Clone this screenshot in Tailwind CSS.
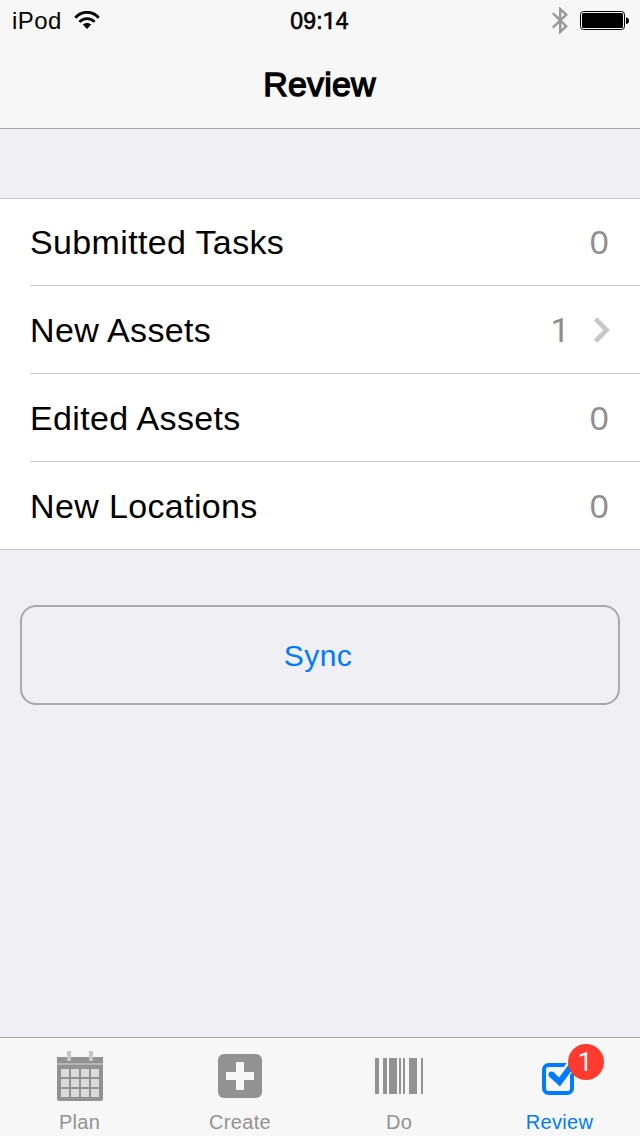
<!DOCTYPE html>
<html lang="en">
<head>
<meta charset="utf-8">
<title>Review</title>
<script src="https://cdn.jsdelivr.net/npm/@tailwindcss/browser@4"></script>
</head>
<body class="flex h-[1136px] w-[640px] flex-col overflow-hidden bg-[#efeff4] font-['Liberation_Sans',Arial,sans-serif] text-black">
  <header class="h-[129px] shrink-0 border-b border-[#a7a7aa] bg-[#f7f7f7]">
    <div class="grid h-10 grid-cols-3 items-center pl-3 pr-[11px]">
      <div class="flex items-center gap-3">
        <span class="text-2xl leading-[42px] tracking-[0.4px]">iPod</span>
        <svg class="h-5 w-[26px]" viewBox="0 0 26 20" fill="none" stroke="#000">
          <path d="M1.3 6.700C8-.6 18-.6 24.7 6.700" stroke-width="2.800"/>
          <path d="M5.4 10.900c4.2-4.500 11-4.500 15.2 0" stroke-width="2.800"/>
          <path d="M8.8 13.600c2.2-2.200 6.2-2.200 8.4 0L13 18z" fill="#000" stroke="none"/>
        </svg>
      </div>
      <div class="pr-0.5 text-center text-[23px] leading-[42px] tracking-[0.15px] [-webkit-text-stroke:0.6px_#000]">09:<span class="font-[Roboto] leading-none">1</span>4</div>
      <div class="flex items-center justify-end gap-3">
        <svg class="-mt-px h-[27px] w-4" viewBox="0 0 16 27" fill="none" stroke="#98989a" stroke-width="2.4"><path d="M.8 6.2l13.4 13L8.2 25V2l6 5.800L.8 20.600"/></svg>
        <svg class="h-5 w-[49px]" viewBox="0 0 49 20"><rect x=".5" y=".5" width="44" height="18" rx="3" fill="#f7f7f7" stroke="#000"/><rect x="2" y="2" width="41" height="15" rx="1.500" fill="#000"/><path d="M46 6.500c4 0 4 6.500 0 6.500z" fill="#000"/></svg>
      </div>
    </div>
    <h1 class="pr-px text-center text-[34px] leading-[88px] tracking-[0.2px] [-webkit-text-stroke:1.3px_#000]">Review</h1>
  </header>

  <main class="flex-1">
    <ul class="mt-[69px] border-y border-[#c8c7cc] bg-white text-[34px] leading-[87px] tracking-[0.36px]">
      <li class="ml-[30px] flex h-[87px] justify-between border-b border-[#c8c7cc] pr-[31px]"><span>Submitted Tasks</span><span class="text-[#8e8e93]">0</span></li>
      <li class="ml-[30px] flex h-[88px] justify-between border-b border-[#c8c7cc] pr-[30px] leading-[89px]"><span>New Assets</span>
        <span class="flex items-center gap-6 text-[#8e8e93]"><span class="pt-0.5 font-[Roboto]">1</span>
          <svg class="mt-px h-[26px] w-4" viewBox="0 0 16 26" fill="none" stroke="#c7c7cc" stroke-width="4.600"><path d="M1.600 2l11 11-11 11"/></svg>
        </span>
      </li>
      <li class="ml-[30px] flex h-[88px] justify-between border-b border-[#c8c7cc] pr-[31px] leading-[89px]"><span>Edited Assets</span><span class="text-[#8e8e93]">0</span></li>
      <li class="ml-[30px] flex h-[87px] justify-between pr-[31px] leading-[89px]"><span>New Locations</span><span class="text-[#8e8e93]">0</span></li>
    </ul>
    <button class="mx-5 mt-[55px] block h-[100px] w-[600px] rounded-2xl border-2 border-[#a9a9ac] pr-1 text-center text-[30px] tracking-[0.4px] text-[#007aff]">Sync</button>
  </main>

  <nav class="grid h-[99px] shrink-0 grid-cols-4 border-t border-[#a7a7aa] bg-[#f7f7f7] text-center text-xl leading-7 tracking-[0.3px] text-[#929292]">
    <a class="flex flex-col items-center">
      <svg class="mt-3 h-[52px] w-[46px]" viewBox="0 0 46 52">
        <path d="M0 7h46v6H0zM0 15h46v34a2 2 0 0 1-2 2H2a2 2 0 0 1-2-2z" fill="#929292"/>
        <path d="M0 13h46v2H0z" fill="#b5b5b5"/>
        <path d="M10 1h4v10h-4zM32 1h4v10h-4z" fill="#c8c8c8"/>
        <path d="M4 19h8v8H4zm10 0h8v8h-8zm10 0h8v8h-8zm10 0h8v8h-8zM4 29h8v8H4zm10 0h8v8h-8zm10 0h8v8h-8zm10 0h8v8h-8zM4 39h8v8H4zm10 0h8v8h-8zm10 0h8v8h-8zm10 0h8v8h-8z" fill="#dadada"/>
      </svg>
      <span class="mt-1.5 pr-px">Plan</span>
    </a>
    <a class="flex flex-col items-center">
      <svg class="mt-4 h-11 w-11" viewBox="0 0 44 44"><rect width="44" height="44" rx="6" fill="#929292"/><path d="M18 8h8v10h10v8H26v10h-8V26H8v-8h10z" fill="#f7f7f7"/></svg>
      <span class="mt-2.5">Create</span>
    </a>
    <a class="flex flex-col items-center">
      <svg class="mr-0.5 mt-5 h-9 w-12 shrink-0" viewBox="0 0 48 36"><path d="M0 0h4v36H0zM8 0h4v36H8zM14 0h8v36h-8zM24 0h2v36h-2zM28 0h2v36h-2zM34 0h8v36h-8zM46 0h2v36h-2z" fill="#929292"/></svg>
      <span class="mt-3.5 pr-0.5">Do</span>
    </a>
    <a class="flex flex-col items-center text-[#007aff]">
      <div class="relative mt-6 mr-1 h-9 w-8">
        <svg class="h-9 w-8" viewBox="0 0 32 36" fill="none" stroke="#007aff">
          <rect x="2" y="3" width="28" height="28" rx="4.500" stroke-width="4"/>
          <path d="M17 19L32 0" stroke="#f7f7f7" stroke-width="10"/>
          <path d="M30 14v8" stroke-width="4"/>
          <path d="M9.500 12.500l8 7.500L33 -1" stroke-width="6"/>
          <circle cx="9.500" cy="12.500" r="3" fill="#007aff" stroke="none"/>
        </svg>
        <span class="absolute -top-[18px] left-[26px] h-9 w-9 rounded-full bg-[#ff3b30] pr-0.5 font-[Roboto] text-[26px] leading-9 tracking-normal text-white">1</span>
      </div>
      <span class="mt-2.5 pr-px">Review</span>
    </a>
  </nav>
</body>
</html>
